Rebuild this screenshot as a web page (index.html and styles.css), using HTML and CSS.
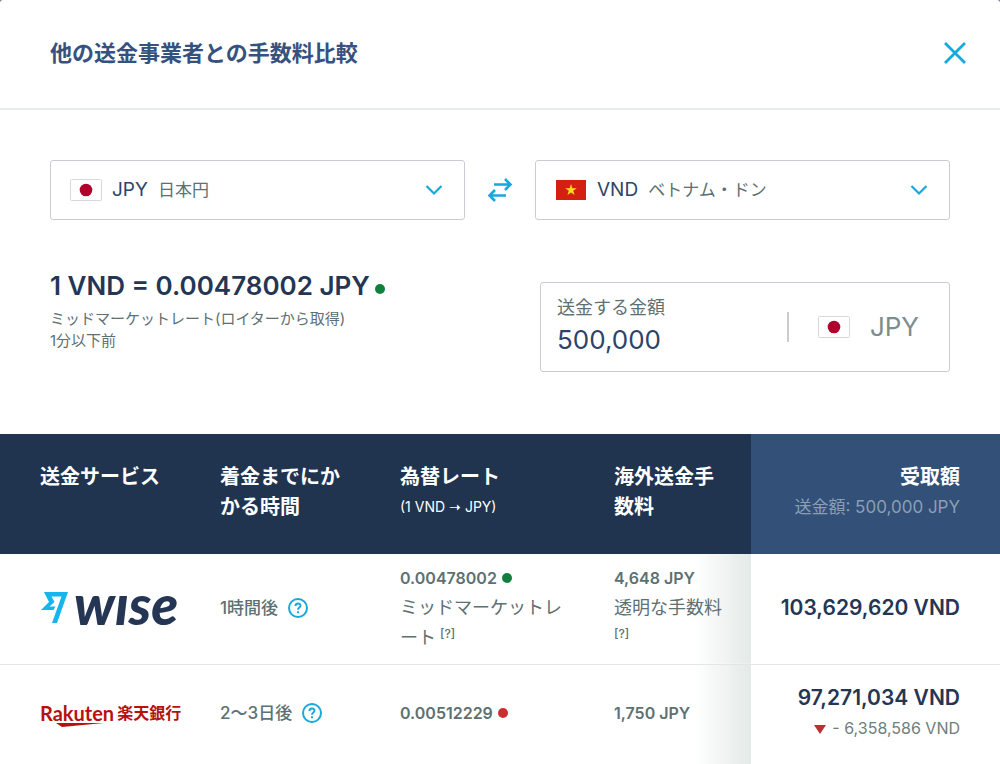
FILE: index.html
```html
<!DOCTYPE html>
<html lang="ja">
<head>
  <meta charset="utf-8">
  <meta name="viewport" content="width=device-width, initial-scale=1">
  <title>他の送金事業者との手数料比較</title>
  <link rel="stylesheet" href="styles.css">
</head>
<body>
  <div class="modal">
    <header class="modal-header">
      <h1>他の送金事業者との手数料比較</h1>
      <button type="button" class="icon-button" aria-label="閉じる">
        <svg width="24" height="24" viewBox="0 0 24 24" fill="none" stroke="currentColor" stroke-width="2.8"><path d="M2 2l20 20M22 2L2 22"/></svg>
      </button>
    </header>

    <form class="calculator">
      <div class="currencies">
        <label class="currency">
          <svg class="flag" viewBox="0 0 32 22"><rect x=".5" y=".5" width="31" height="21" rx="1" fill="#fff" stroke="#d5d8dc"/><circle cx="16" cy="11" r="6.3" fill="#b0002b"/></svg>
          <span class="currency-code">JPY</span>
          <select>
            <option>日本円</option>
            <option>ベトナム・ドン</option>
          </select>
          <svg class="chevron" width="18" height="12" viewBox="0 0 18 12" fill="none" stroke="currentColor" stroke-width="2.2"><path d="M1.500 2l7.500 7.500L16.500 2"/></svg>
        </label>
        <button type="button" class="icon-button swap" aria-label="通貨を入れ替える">
          <svg width="26" height="26" viewBox="0 0 26 26" fill="none" stroke="currentColor" stroke-width="2.600"><path d="M7 7.500h16M18 2l5.500 5.500L18 13M19 18.500H2.500M8 13l-5.500 5.500L8 24"/></svg>
        </button>
        <label class="currency">
          <svg class="flag" viewBox="0 0 32 22"><rect x="1" y="1" width="30" height="20" fill="#d42010"/><path fill="#ffdc20" d="M16 5l1.400 4.200h4.400l-3.600 2.600 1.400 4.200-3.600-2.600-3.600 2.600 1.400-4.200-3.600-2.600h4.400z"/></svg>
          <span class="currency-code">VND</span>
          <select>
            <option>ベトナム・ドン</option>
            <option>日本円</option>
          </select>
          <svg class="chevron" width="18" height="12" viewBox="0 0 18 12" fill="none" stroke="currentColor" stroke-width="2.2"><path d="M1.500 2l7.500 7.500L16.500 2"/></svg>
        </label>
      </div>

      <div class="rate-row">
        <div class="rate">
          <h2>1 VND = 0.00478002 JPY<span class="dot"></span></h2>
          <p>ミッドマーケットレート(ロイターから取得)<br>1分以下前</p>
        </div>
        <div class="amount">
          <div class="amount-field">
            <label for="amount">送金する金額</label>
            <input id="amount" type="text" inputmode="decimal" value="500,000">
          </div>
          <div class="amount-currency">
            <svg class="flag" viewBox="0 0 32 22"><rect x=".5" y=".5" width="31" height="21" rx="1" fill="#fff" stroke="#d5d8dc"/><circle cx="16" cy="11" r="6.3" fill="#b0002b"/></svg>
            <span>JPY</span>
          </div>
        </div>
      </div>
    </form>

    <table class="comparison">
      <thead>
        <tr>
          <th class="col-service" scope="col">送金サービス</th>
          <th class="col-time" scope="col">着金までにかかる時間</th>
          <th class="col-rate" scope="col">為替レート<small>(1 VND ➝ JPY)</small></th>
          <th class="col-fee" scope="col">海外送金手数料</th>
          <th class="col-total" scope="col">受取額<span class="sent">送金額: 500,000 JPY</span></th>
        </tr>
      </thead>
      <tbody>
        <tr>
          <td>
            <div class="wise">
              <svg width="28" height="31" viewBox="0 0 28 31" fill="#16b5ee"><path d="M4 0h24L17 31h-5L21.500 4.500H11.500l3 5.500-5 4.500h6l-2 3.500H1l8-8z"/></svg>
              <span>wıse</span>
            </div>
          </td>
          <td>
            <div class="time">1時間後
              <button type="button" class="icon-button" aria-label="着金時間について">
                <svg width="20" height="20" viewBox="0 0 20 20" fill="none" stroke="currentColor" stroke-width="2"><circle cx="10" cy="10" r="9"/><path d="M7.500 8c0-3.400 5-3.400 5-.3 0 1.900-2.500 1.900-2.500 4M10 13.300v2"/></svg>
              </button>
            </div>
          </td>
          <td>
            <strong>0.00478002<span class="dot"></span></strong>
            <div class="note">ミッドマーケットレート<a href="#rate">[?]</a></div>
          </td>
          <td class="fee">
            <strong>4,648 JPY</strong>
            <div class="note">透明な手数料 <a class="wrapped" href="#fee">[?]</a></div>
          </td>
          <td class="total">103,629,620 VND</td>
        </tr>
        <tr>
          <td>
            <div class="rakuten">
              <span class="rakuten-name">Rakuten<svg width="48" height="4" viewBox="0 0 48 4" fill="#b5120e"><path d="M0 0h48L6 4z"/></svg></span>
              <span class="rakuten-bank">楽天銀行</span>
            </div>
          </td>
          <td>
            <div class="time">2〜3日後
              <button type="button" class="icon-button" aria-label="着金時間について">
                <svg width="20" height="20" viewBox="0 0 20 20" fill="none" stroke="currentColor" stroke-width="2"><circle cx="10" cy="10" r="9"/><path d="M7.500 8c0-3.400 5-3.400 5-.3 0 1.900-2.500 1.900-2.500 4M10 13.300v2"/></svg>
              </button>
            </div>
          </td>
          <td><strong>0.00512229<span class="dot dot-red"></span></strong></td>
          <td class="fee"><strong>1,750 JPY</strong></td>
          <td class="total">97,271,034 VND<div class="difference"><span class="down"></span>- 6,358,586 VND</div></td>
        </tr>
      </tbody>
    </table>
  </div>
</body>
</html>
```
FILE: styles.css
```css
* {
  box-sizing: border-box;
}

body {
  margin: 0;
  background: #6b7788;
  color: #5d7072;
  font-family: Inter, "Noto Sans CJK JP", sans-serif;
  font-size: 16px;
  line-height: 30px;
}

.modal {
  min-height: 100vh;
  background: #fff;
  border-radius: 3px 3px 0 0;
  overflow: hidden;
}

h1, h2, p {
  margin: 0;
}

svg {
  display: block;
  flex: none;
}

.icon-button {
  padding: 0;
  border: 0;
  background: none;
  color: #17a9dc;
  cursor: pointer;
}

.modal-header {
  display: flex;
  justify-content: space-between;
  align-items: center;
  padding: 38px 33px 40px 50px;
  border-bottom: 2px solid #e8ebed;
}

.modal-header h1 {
  color: #37517e;
  font-size: 22px;
  font-weight: 700;
  line-height: 30px;
}

.calculator {
  padding: 50px 50px 62px;
}

.currencies {
  display: grid;
  grid-template-columns: 1fr 70px 1fr;
  align-items: center;
}

.currency {
  display: flex;
  align-items: center;
  height: 60px;
  padding: 0 21px 0 19px;
  border: 1px solid #c9cdd2;
  border-radius: 3px;
}

.currency-code {
  margin: 0 10px;
  color: #2e4369;
  font-size: 19px;
}

.currency select {
  flex: 1;
  min-width: 0;
  padding: 0;
  border: 0;
  background: none;
  color: #5d7072;
  font: inherit;
  font-size: 17px;
  appearance: none;
}

.flag {
  width: 32px;
  height: 22px;
}

.chevron {
  color: #17a9dc;
}

.swap {
  justify-self: center;
}

.rate-row {
  display: flex;
  justify-content: space-between;
  align-items: flex-start;
  padding-top: 48px;
}

.rate h2 {
  margin-bottom: 4px;
  color: #253655;
  font-size: 26px;
  font-weight: 600;
  line-height: 36px;
}

.rate p {
  font-size: 15px;
  line-height: 22px;
}

.dot {
  display: inline-block;
  width: 10px;
  height: 10px;
  margin-left: 5px;
  border-radius: 50%;
  background: #12803c;
  vertical-align: 1px;
}

.dot-red {
  background: #c92f30;
}

.amount {
  display: flex;
  align-items: center;
  flex: 0 1 410px;
  height: 90px;
  margin-top: 14px;
  padding: 0 30px 0 16px;
  border: 1px solid #c9cdd2;
  border-radius: 3px;
}

.amount-field {
  flex: 1;
  min-width: 0;
  padding-bottom: 6px;
}

.amount-field label {
  display: block;
  font-size: 18px;
}

.amount-field input {
  display: block;
  width: 100%;
  height: 32px;
  padding: 0;
  border: 0;
  background: none;
  color: #2e4369;
  font: inherit;
  font-size: 26px;
}

.amount-currency {
  display: flex;
  align-items: center;
  gap: 20px;
  padding-left: 29px;
  border-left: 2px solid #c9cdd2;
  color: #7c8d8e;
  font-size: 26px;
}

.comparison {
  width: 100%;
  table-layout: fixed;
  border-collapse: collapse;
}

.comparison th {
  height: 120px;
  padding: 28px 28px 28px 20px;
  background: #20344f;
  color: #fff;
  font-size: 20px;
  font-weight: 700;
  text-align: left;
  vertical-align: top;
}

.comparison td {
  height: 110px;
  padding: 8px 28px 10px 20px;
  border-bottom: 1px solid #e2e6e8;
}

.comparison tr > :first-child {
  padding-left: 40px;
  padding-right: 0;
}

.comparison tr > :last-child {
  padding-left: 0;
  padding-right: 40px;
  text-align: right;
}

.comparison tbody tr:last-child td {
  height: 100px;
  border-bottom: 0;
}

.comparison .col-service {
  width: 20%;
}

.comparison .col-time {
  width: 18%;
}

.comparison .col-rate {
  width: 21.4%;
}

.comparison .col-fee {
  width: 15.7%;
}

.comparison .col-total {
  background: #335078;
}

.comparison small {
  display: block;
  font-size: 14px;
  font-weight: 400;
}

.sent {
  display: block;
  color: #8a9fb5;
  font-size: 17px;
  font-weight: 400;
}

.comparison strong {
  display: block;
  font-size: 16px;
  font-weight: 600;
}

.note {
  font-size: 18px;
}

.note a {
  display: inline-block;
  margin-left: 4px;
  color: inherit;
  font-size: 12px;
  font-weight: 500;
  line-height: 16px;
  text-decoration: none;
  vertical-align: 6px;
}

.note .wrapped {
  margin-left: 0;
}

.time {
  display: flex;
  align-items: center;
  gap: 10px;
  font-size: 17px;
  font-weight: 500;
}

.fee {
  background: linear-gradient(to left, #e3eae8, #fff) right / 56px 100% no-repeat;
}

.total {
  color: #253655;
  font-size: 21px;
  font-weight: 600;
}

.difference {
  color: #6d7e80;
  font-size: 16px;
  font-weight: 400;
}

.down {
  display: inline-block;
  margin-right: 6px;
  border: 6px solid transparent;
  border-top: 9px solid #b8322f;
  border-bottom: 0;
}

.wise {
  display: flex;
  align-items: flex-start;
  gap: 6px;
  height: 32px;
  color: #253655;
}

.wise span {
  font-family: Lato, sans-serif;
  font-size: 55px;
  font-style: italic;
  font-weight: 900;
  line-height: 24px;
}

.rakuten {
  display: flex;
  align-items: center;
  gap: 3px;
  color: #b5120e;
  font-weight: 700;
}

.rakuten-name {
  position: relative;
  font-family: Lato, sans-serif;
  font-size: 20px;
  line-height: 26px;
}

.rakuten-name svg {
  position: absolute;
  left: 16px;
  bottom: -1px;
}

.rakuten-bank {
  font-size: 16px;
  line-height: 26px;
}
```
